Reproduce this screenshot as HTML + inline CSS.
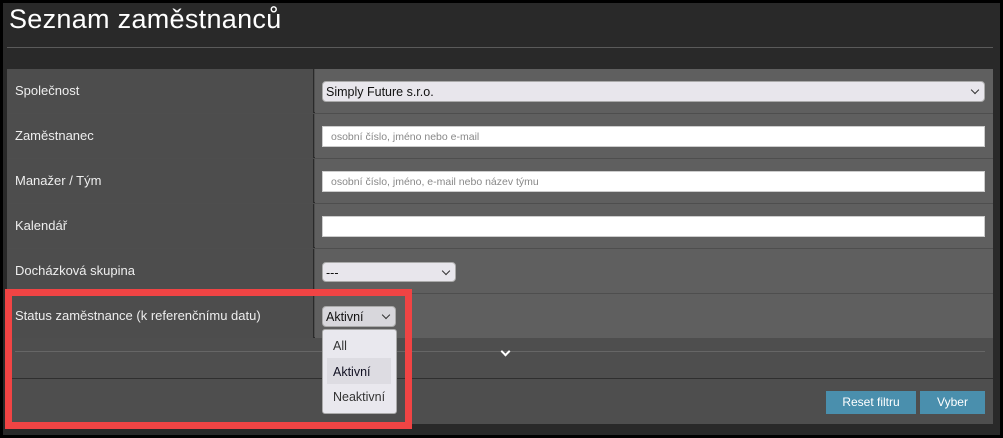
<!DOCTYPE html>
<html><head><meta charset="utf-8"><style>
*{box-sizing:border-box;margin:0;padding:0}
body{width:1003px;height:438px;background:#000;font-family:"Liberation Sans","DejaVu Sans",sans-serif;position:relative;overflow:hidden}
.bg{position:absolute;left:3px;top:3px;width:997px;height:432px;background:#292929}
h1{position:absolute;left:9px;top:4px;font-weight:normal;font-size:27px;color:#fff;letter-spacing:0.3px}
.hr{position:absolute;left:7px;top:47px;width:986px;height:1px;background:#5a5a5a}
.panel{position:absolute;left:7px;top:69px;width:986px;height:355px;background:#4e4e4e}
.row{position:absolute;left:7px;width:986px;height:44px;border-bottom:1px solid #2a2a2a}
.lab{position:absolute;left:0;top:0;width:307px;height:44px;background:#4d4d4d;color:#eee;font-size:13px;padding:14px 0 0 8px;border-right:1px solid #2a2a2a}
.val{position:absolute;left:308px;top:0;right:0;height:44px;background:#5f5f5f}
.inp{position:absolute;left:7px;right:8px;top:12px;height:21px;background:#fff;border:1px solid #ccc;font-size:10.5px;color:#888;padding:4px 0 0 8px}
.sel{position:absolute;left:7px;top:12px;height:21px;background:#e8e6ec;border:1px solid #aaa;border-radius:4px;font-size:12.5px;color:#111;padding:3px 0 0 3px}
.chev{position:absolute;right:6px;top:5px;width:6px;height:6px;border-right:1.3px solid #333;border-bottom:1.3px solid #333;transform:rotate(45deg)}
.btn{position:absolute;top:391px;height:23px;background:#4a8fad;color:#fff;font-size:12px;text-align:center;line-height:23px}
.red{position:absolute;left:5px;top:289px;width:407px;height:140px;border:7px solid #f04444}
.dd{position:absolute;left:322px;top:329px;width:75px;height:85px;background:#e9e8ee;border:1px solid #aaa;border-radius:3px;font-size:12.5px;color:#333}
.dd div{position:absolute;left:10px}
</style></head><body>
<div class="bg"></div>
<h1>Seznam zaměstnanců</h1>
<div class="hr"></div>
<div class="panel"></div>
<div class="row" style="top:69px"><div class="lab">Společnost</div><div class="val"><div class="sel" style="right:8px">Simply Future s.r.o.<span class="chev"></span></div></div></div>
<div class="row" style="top:114px"><div class="lab">Zaměstnanec</div><div class="val"><div class="inp">osobní číslo, jméno nebo e-mail</div></div></div>
<div class="row" style="top:159px"><div class="lab">Manažer / Tým</div><div class="val"><div class="inp">osobní číslo, jméno, e-mail nebo název týmu</div></div></div>
<div class="row" style="top:204px"><div class="lab">Kalendář</div><div class="val"><div class="inp"></div></div></div>
<div class="row" style="top:249px"><div class="lab">Docházková skupina</div><div class="val"><div class="sel" style="width:134px;top:13px;height:20px">---<span class="chev"></span></div></div></div>
<div class="row" style="top:294px"><div class="lab" style="padding-top:14px">Status zaměstnance (k referenčnímu datu)</div><div class="val"><div class="sel" style="width:74px;background:#d8d7dc">Aktivní<span class="chev"></span></div></div></div>
<div style="position:absolute;left:15px;top:351px;width:970px;height:1px;background:#666"></div>
<div style="position:absolute;left:7px;top:378px;width:986px;height:1px;background:#2f2f2f"></div>
<div style="position:absolute;left:502px;top:348px;width:7px;height:7px;border-right:2.5px solid #fff;border-bottom:2.5px solid #fff;transform:rotate(45deg)"></div>
<div class="btn" style="left:826px;width:90px">Reset filtru</div>
<div class="btn" style="left:920px;width:65px">Vyber</div>
<div class="red"></div>
<div class="dd">
<div style="top:9px">All</div>
<div style="left:4px;top:28px;width:64px;height:26px;background:#dddce2"></div>
<div style="top:35px;color:#112">Aktivní</div>
<div style="top:60px">Neaktivní</div>
</div>
</body></html>
